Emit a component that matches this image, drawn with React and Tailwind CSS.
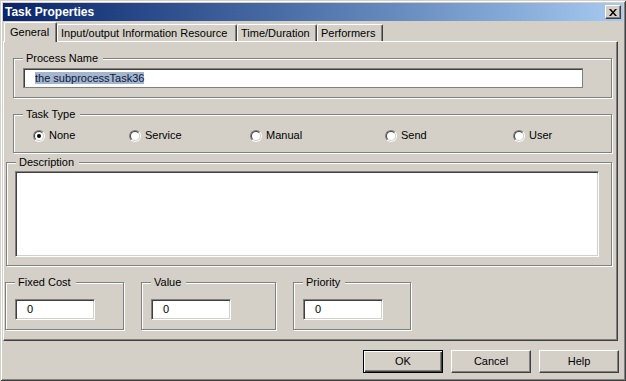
import React from 'react';

const sunken = 'border border-t-[#808080] border-l-[#808080] border-b-white border-r-white shadow-[inset_1px_1px_0_#404040,inset_-1px_-1px_0_#d4d0c8]';

function Group({ label, className, children }) {
    return (
        <div className={`relative border border-[#808080] shadow-[inset_1px_1px_0_#fff,1px_1px_0_#fff] ${className}`}>
            <span className="absolute top-[-7px] left-[9px] bg-[#d4d0c8] pl-[3px] pr-[5px] leading-[13px]">{label}</span>
            {children}
        </div>
    );
}

function Radio({ label, checked, width }) {
    return (
        <div className="flex items-center" style={{ width }}>
            <div className="w-[12px] h-[12px] rounded-full border border-t-[#808080] border-l-[#808080] border-b-white border-r-white">
                <div className="w-full h-full rounded-full bg-white border border-t-[#404040] border-l-[#404040] border-b-[#d4d0c8] border-r-[#d4d0c8] flex items-center justify-center">
                    {checked && <div className="w-[4px] h-[4px] rounded-full bg-black" />}
                </div>
            </div>
            <span className="ml-[4px] leading-[13px]">{label}</span>
        </div>
    );
}

function NumberBox({ value }) {
    return (
        <div className={`mt-[16px] ml-[9px] w-[80px] h-[21px] bg-white ${sunken} flex items-center pl-[11px]`}>
            {value}
        </div>
    );
}

function Button({ children, isDefault }) {
    if (isDefault) {
        return (
            <div className="w-[80px] h-[23px] border border-black shadow-[inset_1px_1px_0_#fff,inset_-1px_-1px_0_#404040,inset_-2px_-2px_0_#808080] flex items-center justify-center">
                {children}
            </div>
        );
    }
    return (
        <div className="w-[80px] h-[23px] border border-t-white border-l-white border-b-[#404040] border-r-[#404040] shadow-[inset_-1px_-1px_0_#808080] flex items-center justify-center">
            {children}
        </div>
    );
}

export default function App() {
    const tabs = [
        { name: 'Input/output Information Resource', w: 'w-[180px]' },
        { name: 'Time/Duration', w: 'w-[80px]' },
        { name: 'Performers', w: 'w-[66px]' },
    ];

    return (
        <div className="w-[626px] h-[381px] bg-[#d4d0c8] p-[3px] flex flex-col text-[11px] text-black shadow-[inset_1px_1px_0_#d4d0c8,inset_-1px_-1px_0_#404040,inset_2px_2px_0_#fff,inset_-2px_-2px_0_#808080] overflow-hidden"
            style={{ fontFamily: '"Liberation Sans", Arial, sans-serif' }}>
            {/* title bar */}
            <div className="h-[18px] flex items-center justify-between bg-gradient-to-r from-[#0a246a] to-[#a6caf0] pl-[2px] pr-[2px]">
                <span className="text-white font-bold text-[12px] leading-[14px]">Task Properties</span>
                <div className="w-[16px] h-[14px] bg-[#d4d0c8] border border-t-white border-l-white border-b-[#404040] border-r-[#404040] shadow-[inset_-1px_-1px_0_#808080] flex items-center justify-center">
                    <svg width="8" height="7" viewBox="0 0 8 7">
                        <path d="M0 0h2l2 2.5L6 0h2L5 3.5 8 7H6L4 4.5 2 7H0l3-3.5z" fill="#000" />
                    </svg>
                </div>
            </div>

            {/* tabs */}
            <div className="h-[20px] flex items-end pl-[1px]">
                <div className="relative z-10 w-[53px] h-[20px] -mb-[1px] bg-[#d4d0c8] border-t border-l border-white border-r border-r-[#404040] shadow-[inset_-1px_0_0_#808080] rounded-t-[2px] pl-[5px] pt-[3px] leading-[13px]">
                    General
                </div>
                {tabs.map((t) => (
                    <div key={t.name} className={`${t.w} h-[17px] border-t border-l border-white border-r border-r-[#404040] shadow-[inset_-1px_0_0_#808080] rounded-t-[2px] pl-[3px] pt-[2px] leading-[13px] whitespace-nowrap`}>
                        {t.name}
                    </div>
                ))}
            </div>

            {/* panel */}
            <div className="w-[615px] h-[300px] border border-t-white border-l-white border-b-[#404040] border-r-[#404040] shadow-[inset_-1px_-1px_0_#808080] flex flex-col">
                <Group label="Process Name" className="mt-[16px] ml-[9px] w-[599px] h-[40px]">
                    <div className="mt-[9px] ml-[9px] w-[560px] h-[20px] bg-white border border-[#808080] shadow-[inset_1px_1px_0_#404040] flex items-center pl-[11px]">
                        <span className="bg-[#a6b5ce] text-[#0a1a40] leading-[12px]">the subprocessTask36</span>
                    </div>
                </Group>

                <Group label="Task Type" className="mt-[16px] ml-[9px] w-[599px] h-[39px]">
                    <div className="mt-[14px] ml-[19px] flex">
                        <Radio label="None" checked width={96} />
                        <Radio label="Service" width={121} />
                        <Radio label="Manual" width={135} />
                        <Radio label="Send" width={128} />
                        <Radio label="User" width={60} />
                    </div>
                </Group>

                <Group label="Description" className="mt-[9px] ml-[2px] w-[606px] h-[104px]">
                    <div className={`mt-[8px] ml-[8px] w-[584px] h-[86px] bg-white ${sunken}`} />
                </Group>

                <div className="mt-[16px] flex">
                    <Group label="Fixed Cost" className="ml-[1px] w-[119px] h-[48px]">
                        <NumberBox value="0" />
                    </Group>
                    <Group label="Value" className="ml-[17px] w-[135px] h-[48px]">
                        <NumberBox value="0" />
                    </Group>
                    <Group label="Priority" className="ml-[17px] w-[118px] h-[48px]">
                        <NumberBox value="0" />
                    </Group>
                </div>
            </div>

            {/* buttons */}
            <div className="mt-[9px] ml-[360px] flex gap-[8px]">
                <Button isDefault>OK</Button>
                <Button>Cancel</Button>
                <Button>Help</Button>
            </div>
        </div>
    );
}
